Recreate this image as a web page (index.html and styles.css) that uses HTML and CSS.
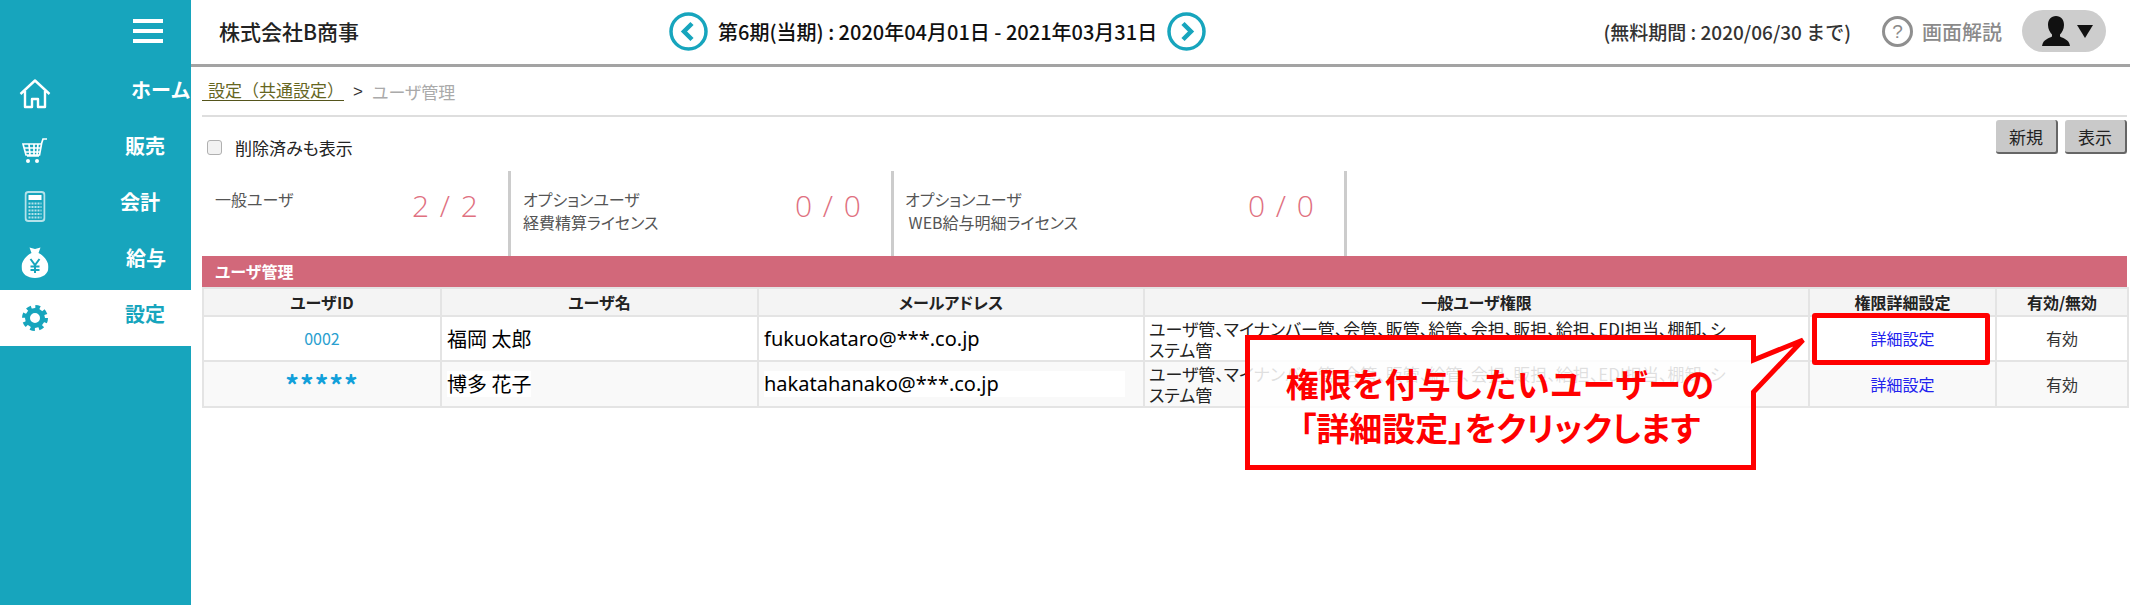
FILE: index.html
```html
<!DOCTYPE html>
<html lang="ja">
<head>
    <meta charset="UTF-8">
    <title>ユーザ管理</title>
    <link rel="stylesheet" href="styles.css">
</head>
<body>
<div class="page">
    <aside class="sidebar">
        <div class="menu-toggle"><span></span><span></span><span></span></div>
        <a class="nav-item">
            <svg class="nav-icon" width="32" height="30" viewBox="0 0 32 30"><path d="M1.5 15 16 1.5 30.5 15M6 12v16h7v-8h6v8h7V12" fill="none" stroke="#fff" stroke-width="2.4" stroke-linejoin="round"/></svg>
            <span class="nav-label">ホーム</span>
        </a>
        <a class="nav-item">
            <svg class="nav-icon" width="26" height="27" viewBox="0 0 26 27"><path d="M1 7h18.500l-2 11H4zM2 11h17M3 15h15M7 7l1 11M12 7v11M16 7l-1 11M17 19H5M19 8l2-6h4" fill="none" stroke="#fff" stroke-width="1.700"/><circle cx="6" cy="24" r="2" fill="#fff"/><circle cx="15" cy="24" r="2" fill="#fff"/></svg>
            <span class="nav-label">販売</span>
        </a>
        <a class="nav-item">
            <svg class="nav-icon" width="21" height="31" viewBox="0 0 21 31"><rect x="1" y="1" width="19" height="29" rx="3" fill="none" stroke="#b5e2ea" stroke-width="2"/><rect x="4" y="4" width="13" height="5" fill="#fff"/><path d="M4 12.500h13M4 16h13M4 19.500h13M4 23h13M4 26.500h13" stroke="#b5e2ea" stroke-width="2" stroke-dasharray="2 1"/></svg>
            <span class="nav-label">会計</span>
        </a>
        <a class="nav-item">
            <svg class="nav-icon" width="27" height="32" viewBox="0 0 27 32"><path d="M8 1.500 13.500 3 19 1.500 17 7c6 3 10 9 10 14 0 7-6 11-13.500 11S0 28 0 21c0-5 4-11 10-14z" fill="#fff"/><path d="M9 13l4.500 6 4.500-6M13.500 19v8M9 20.500h9M9 24h9" fill="none" stroke="#17a5bd" stroke-width="2"/></svg>
            <span class="nav-label">給与</span>
        </a>
        <a class="nav-item active">
            <svg class="nav-icon" width="26" height="26" viewBox="0 0 26 26"><circle cx="13" cy="13" r="7.500" fill="none" stroke="#17a5bd" stroke-width="5"/><circle cx="13" cy="13" r="11" fill="none" stroke="#17a5bd" stroke-width="4" stroke-dasharray="4.640 4"/></svg>
            <span class="nav-label">設定</span>
        </a>
    </aside>

    <main class="main">
        <header class="topbar">
            <div class="company">株式会社B商事</div>
            <div class="period">
                <svg width="39" height="39" viewBox="0 0 39 39"><circle cx="19.500" cy="19.500" r="17.500" fill="#fff" stroke="#17a5bd" stroke-width="3.500"/><path d="M23 11.500 15 19.500l8 8" fill="none" stroke="#17a5bd" stroke-width="4.500"/></svg>
                <span class="period-text">第6期(当期) : 2020年04月01日 - 2021年03月31日</span>
                <svg width="39" height="39" viewBox="0 0 39 39"><circle cx="19.500" cy="19.500" r="17.500" fill="#fff" stroke="#17a5bd" stroke-width="3.500"/><path d="M16 11.500l8 8-8 8" fill="none" stroke="#17a5bd" stroke-width="4.500"/></svg>
            </div>
            <div class="top-right">
                <span class="free-until">(無料期間 : 2020/06/30 まで)</span>
                <span class="help"><i class="help-mark">?</i>画面解説</span>
                <span class="user-pill">
                    <svg width="28" height="30" viewBox="0 0 28 30"><path d="M14 0c5 0 8 3.500 8 9 0 4-2 7.500-4 9.500v2c3 2 9 2.500 10 9.500H0c1-7 7-7.500 10-9.500v-2C8 16.500 6 13 6 9c0-5.500 3-9 8-9z" fill="#111"/></svg>
                    <span class="caret"></span>
                </span>
            </div>
        </header>

        <nav class="breadcrumb">
            <a class="crumb-link">設定（共通設定）</a>
            <span class="crumb-sep">&gt;</span>
            <span class="crumb-now">ユーザ管理</span>
        </nav>

        <div class="toolbar">
            <label class="show-deleted"><span class="check"></span>削除済みも表示</label>
            <div class="buttons">
                <button class="btn">新規</button>
                <button class="btn">表示</button>
            </div>
        </div>

        <section class="stats">
            <div class="stat stat-a">
                <div class="stat-label">一般ユーザ</div>
                <div class="stat-num">2 / 2</div>
            </div>
            <div class="stat stat-b">
                <div class="stat-label">オプションユーザ<br>経費精算ライセンス</div>
                <div class="stat-num">0 / 0</div>
            </div>
            <div class="stat stat-c">
                <div class="stat-label">オプションユーザ<br>&nbsp;WEB給与明細ライセンス</div>
                <div class="stat-num">0 / 0</div>
            </div>
        </section>

        <h2 class="section-title">ユーザ管理</h2>
        <table class="users">
            <colgroup>
                <col class="c-id"><col class="c-name"><col class="c-mail"><col class="c-perm"><col class="c-detail"><col class="c-valid">
            </colgroup>
            <thead>
                <tr><th>ユーザID</th><th>ユーザ名</th><th>メールアドレス</th><th>一般ユーザ権限</th><th>権限詳細設定</th><th>有効/無効</th></tr>
            </thead>
            <tbody>
                <tr>
                    <td class="uid">0002</td>
                    <td class="name"><span>福岡 太郎</span></td>
                    <td class="mail"><span>fukuokataro@***.co.jp</span></td>
                    <td class="perm">ユーザ管、マイナンバー管、会管、販管、給管、会担、販担、給担、EDI担当、棚卸、シ<br>ステム管</td>
                    <td class="detail">詳細設定</td>
                    <td class="valid">有効</td>
                </tr>
                <tr>
                    <td class="uid masked">*****</td>
                    <td class="name"><span>博多 花子</span></td>
                    <td class="mail"><span>hakatahanako@***.co.jp</span></td>
                    <td class="perm">ユーザ管、マイナンバー管、会管、販管、給管、会担、販担、給担、EDI担当、棚卸、シ<br>ステム管</td>
                    <td class="detail">詳細設定</td>
                    <td class="valid">有効</td>
                </tr>
            </tbody>
        </table>
    </main>

    <!-- 注釈 -->
    <div class="mark-box"></div>
    <div class="callout">
        <svg width="562" height="136" viewBox="0 0 562 136"><path d="M2.500 2.500H508.500V25L558 5 508.500 57V132.500H2.500z" fill="#fff" fill-opacity=".86" stroke="#f00" stroke-width="5"/></svg>
        <p class="callout-text">権限を付与したいユーザーの<br><span>「詳細設定」をクリックします</span></p>
    </div>
</div>
</body>
</html>
```
FILE: styles.css
```css
* {
    margin: 0;
    padding: 0;
    box-sizing: border-box;
}
html, body {
    height: 100%;
    background: #fff;
}
body {
    font-family: "Noto Sans CJK JP", "Noto Sans", sans-serif;
    font-size: 17px;
    color: #222;
    overflow: hidden;
}
.page {
    position: relative;
    display: flex;
    width: 2130px;
    height: 605px;
}

/* サイドバー */
.sidebar {
    width: 191px;
    flex: none;
    background: #17a5bd;
}
.menu-toggle {
    height: 66px;
    padding: 19px 0 0 133px;
}
.menu-toggle span {
    display: block;
    width: 30px;
    height: 4px;
    margin-bottom: 6px;
    background: #fff;
}
.nav-item {
    display: flex;
    align-items: center;
    height: 56px;
    color: #fff;
}
.nav-icon {
    flex: none;
    margin-left: 35px;
    transform: translateX(-50%);
}
.nav-icon + .nav-label {
    position: relative;
}
.nav-label {
    position: absolute;
    left: 64px;
    margin-top: -8px;
    font-size: 20px;
    font-weight: 700;
    line-height: 1;
}
.nav-item.active {
    background: #fff;
    color: #17a5bd;
}

/* ヘッダー */
.main {
    flex: 1;
    min-width: 0;
    display: flex;
    flex-direction: column;
}
.topbar {
    display: flex;
    align-items: center;
    height: 67px;
    flex: none;
    padding: 0 24px 2px 28px;
    border-bottom: 3px solid #a3a3a3;
    color: #111;
}
.company {
    width: 450px;
    font-size: 21px;
    font-weight: 500;
    color: #222;
}
.period {
    display: flex;
    align-items: center;
    gap: 10px;
}
.period-text {
    font-size: 20px;
    font-weight: 500;
    white-space: nowrap;
}
.top-right {
    display: flex;
    align-items: center;
    margin-left: auto;
}
.free-until {
    font-size: 19px;
    font-weight: 500;
    color: #333;
    white-space: nowrap;
}
.help {
    display: flex;
    align-items: center;
    gap: 9px;
    margin-left: 31px;
    font-size: 20px;
    font-weight: 500;
    color: #8a8a8a;
    white-space: nowrap;
}
.help-mark {
    display: block;
    width: 31px;
    height: 31px;
    border: 3px solid #8f8f8f;
    border-radius: 50%;
    font-family: "Liberation Sans", sans-serif;
    font-size: 19px;
    font-style: normal;
    font-weight: 400;
    line-height: 25px;
    text-align: center;
}
.user-pill {
    display: flex;
    align-items: center;
    gap: 7px;
    width: 84px;
    height: 42px;
    margin-left: 20px;
    padding-left: 20px;
    border-radius: 21px;
    background: #cdcdcd;
}
.caret {
    width: 0;
    height: 0;
    border-left: 8px solid transparent;
    border-right: 8px solid transparent;
    border-top: 13px solid #111;
}

/* パンくず */
.breadcrumb {
    display: flex;
    align-items: center;
    height: 50px;
    flex: none;
    margin-left: 11px;
    margin-right: 3px;
    border-bottom: 2px solid #dedede;
    line-height: 1;
}
.crumb-link {
    padding: 0 0 2px 6px;
    border-bottom: 1px solid #55551c;
    color: #66661f;
    font-size: 17px;
}
.crumb-sep {
    margin-left: 9px;
    color: #333;
    font-family: "Liberation Sans", sans-serif;
    font-size: 17px;
}
.crumb-now {
    margin-left: 9px;
    color: #aaa;
    font-size: 17px;
    font-feature-settings: "palt";
}

/* ツールバー */
.toolbar {
    display: flex;
    justify-content: space-between;
    height: 54px;
    flex: none;
    margin-left: 11px;
    margin-right: 3px;
}
.show-deleted {
    display: flex;
    align-items: center;
    height: 60px;
    padding-left: 5px;
    font-size: 17px;
    font-feature-settings: "palt";
    color: #222;
}
.check {
    width: 15px;
    height: 15px;
    margin-right: 13px;
    border: 1px solid #b0b0b0;
    border-radius: 3px;
    background: #f2f2f2;
}
.buttons {
    display: flex;
    gap: 7px;
    padding-top: 3px;
}
.btn {
    width: 62px;
    height: 34px;
    border: 0;
    border-right: 2px solid #666;
    border-bottom: 2px solid #666;
    border-radius: 3px;
    background: #c9c9c9;
    font-family: inherit;
    font-size: 17px;
    color: #222;
}

/* 件数 */
.stats {
    display: flex;
    height: 85px;
    flex: none;
    margin-left: 11px;
}
.stat {
    display: flex;
    justify-content: space-between;
    padding: 17px 30px 0 0;
    border-right: 3px solid #ccc;
}
.stat-a {
    width: 309px;
    padding-left: 13px;
}
.stat-b {
    width: 383px;
    padding-left: 12px;
}
.stat-c {
    width: 453px;
    padding-left: 11px;
}
.stat-label {
    font-size: 16px;
    line-height: 23px;
    font-feature-settings: "palt";
    color: #555;
}
.stat-num {
    margin-top: -3px;
    font-family: "Open Sans", sans-serif;
    font-size: 30px;
    font-weight: 300;
    line-height: 42px;
    word-spacing: 3px;
    color: #e0707f;
}

/* テーブル */
.section-title {
    height: 31px;
    flex: none;
    margin-left: 11px;
    margin-right: 3px;
    padding-left: 13px;
    background: #d2687a;
    color: #fff;
    font-size: 16px;
    font-weight: 700;
    line-height: 30px;
    font-feature-settings: "palt";
}
.users {
    width: 1925px;
    margin-left: 11px;
    border-collapse: collapse;
    table-layout: fixed;
}
.c-id { width: 238px; }
.c-name { width: 317px; }
.c-mail { width: 386px; }
.c-perm { width: 665px; }
.c-detail { width: 187px; }
.c-valid { width: 132px; }
.users th, .users td {
    border: 2px solid #e4e4e4;
}
.users th {
    height: 28px;
    background: #f4f4f4;
    color: #222;
    font-size: 16px;
    font-weight: 700;
    font-feature-settings: "palt";
    line-height: 1;
}
.users td {
    height: 45px;
    text-align: center;
    font-size: 16px;
    line-height: 21px;
}
.users tbody tr:nth-child(2) td {
    height: 46px;
    background: #f9f9f9;
}
.uid {
    color: #2a9fd0;
}
.masked {
    color: #12a0da;
    font-weight: 700;
    font-size: 27px !important;
    letter-spacing: 1px;
}
.users td.name {
    padding-left: 5px;
    text-align: left;
    color: #000;
    font-size: 20px;
}
.users td.mail {
    padding-left: 5px;
    text-align: left;
    font-family: "Noto Sans", sans-serif;
    font-size: 20px;
    color: #000;
}
.name span, .mail span {
    display: inline-block;
    line-height: 26px;
    background: #fff;
}
.mail span {
    min-width: 361px;
}
.users td.perm {
    padding-left: 4px;
    text-align: left;
    color: #222;
    font-size: 17px;
    font-feature-settings: "palt";
    white-space: nowrap;
}
.detail {
    color: #2222ee;
}
.valid {
    color: #333;
}

/* 注釈 */
.mark-box {
    position: absolute;
    left: 1812px;
    top: 313px;
    width: 178px;
    height: 52px;
    border: 5px solid #f00;
    border-radius: 3px;
}
.callout {
    position: absolute;
    left: 1245px;
    top: 335px;
    width: 562px;
    height: 136px;
}
.callout svg {
    display: block;
}
.callout-text {
    position: absolute;
    left: 0;
    top: 26px;
    width: 510px;
    color: #f00;
    font-size: 33px;
    font-weight: 700;
    line-height: 44px;
    text-align: center;
    white-space: nowrap;
}
.callout-text span {
    font-feature-settings: "palt";
}
```
